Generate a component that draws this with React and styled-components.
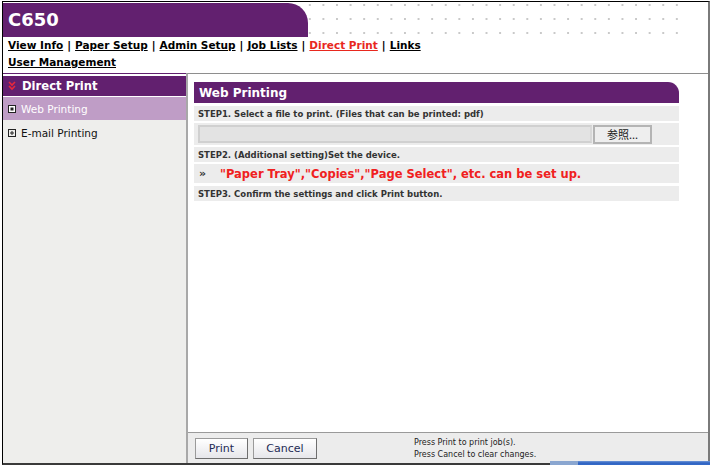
import React from 'react';
import styled, { createGlobalStyle } from 'styled-components';

const GlobalStyle = createGlobalStyle`
	html, body {
		margin: 0;
		padding: 0;
		background: #fff;
		overflow: hidden;
	}
	body {
		font-family: "DejaVu Sans", Verdana, sans-serif;
		color: #000;
	}
`

const purple = '#62206f';

const Frame = styled.div`
	position: relative;
	box-sizing: border-box;
	width: 708px;
	height: 464px;
	margin: 1px 0 0 2px;
	border-top: 1px solid #000;
	border-left: 1px solid #000;
	border-right: 2px solid #7a7a7a;
	border-bottom: 2px solid #3a3a3a;
	display: flex;
	flex-direction: column;
`

const Header = styled.div`
	display: flex;
	height: 34px;
	margin-top: 1px;
`

const TitleTab = styled.div`
	width: 305px;
	background: ${purple};
	border-top-right-radius: 20px;
	color: #fff;
	font-weight: bold;
	font-size: 18px;
	line-height: 33px;
	padding-left: 5px;
	box-sizing: border-box;
`

const Dots = styled.div`
	width: 372px;
	margin-left: -2px;
	background-image: radial-gradient(circle, #c9c9c9 0.9px, transparent 1.4px);
	background-size: 13.6px 14px;
	background-position: -3px -5px;
`

const Nav = styled.div`
	padding: 0 0 0 5px;
	font-size: 10.5px;
	font-weight: bold;
	line-height: 17px;
	height: 36px;
`

const NavLink = styled.a`
	color: ${p => (p.$current ? '#e8281e' : '#000')};
	text-decoration: underline;
	text-underline-offset: 1px;
	cursor: pointer;
`

const Sep = styled.span`
	margin: 0 4px;
`

const Body = styled.div`
	flex: 1;
	display: grid;
	grid-template-columns: 183px 1fr;
	min-height: 0;
`

const Sidebar = styled.div`
	background: #eeeeec;
	border-top: 1px solid ${purple};
	display: flex;
	flex-direction: column;
`

const SideHead = styled.div`
	display: flex;
	align-items: center;
	gap: 6px;
	height: 20px;
	background: ${purple};
	border-top: 2px solid #fff;
	border-bottom: 1px solid #fff;
	padding-left: 5px;
	color: #fff;
	font-size: 11.6px;
	font-weight: bold;
`

const SideItem = styled.div`
	display: flex;
	align-items: center;
	gap: 5px;
	height: ${p => (p.$active ? '23px' : '25px')};
	padding-left: 5px;
	font-size: 10.5px;
	background: ${p => (p.$active ? '#bf9dc6' : 'transparent')};
	color: ${p => (p.$active ? '#fff' : '#111')};
`

const Main = styled.div`
	border-top: 1px solid #8e8e8e;
	border-left: 2px solid #a8a8a8;
	display: flex;
	flex-direction: column;
	min-height: 0;
`

const Content = styled.div`
	flex: 1;
	padding: 8px 29px 0 6px;
	display: flex;
	flex-direction: column;
	gap: 2px;
`

const PanelHead = styled.div`
	height: 21px;
	background: ${purple};
	border-top-right-radius: 11px;
	color: #fff;
	font-size: 12px;
	font-weight: bold;
	line-height: 22px;
	padding-left: 5px;
	margin-bottom: 1px;
`

const Row = styled.div`
	display: flex;
	align-items: center;
	background: #ececec;
	height: ${p => p.$h || 15}px;
	padding: 0 4px;
	font-size: 8.5px;
	font-weight: bold;
	color: #333;
`

const FileField = styled.div`
	width: 394px;
	height: 18px;
	box-sizing: border-box;
	background: #e3e3e3;
	border: 2px solid #d0d0d0;
	border-right-color: #d8d8d8;
`

const BrowseButton = styled.button`
	width: 59px;
	height: 19px;
	margin-left: 1px;
	padding: 0;
	box-sizing: border-box;
	background: #eeeeee;
	border: 2px solid #b4b4b4;
	font-family: "Noto Sans CJK JP", "DejaVu Sans", sans-serif;
	font-size: 11px;
	color: #222;
	line-height: 14px;
`

const Notice = styled.div`
	display: flex;
	align-items: center;
	background: #ececec;
	height: 19px;
	padding-left: 5px;
	font-weight: bold;
	color: #f02020;
	font-size: 11.5px;
	margin: 0 0 1px;
`

const Raquo = styled.span`
	color: #333;
	font-size: 11px;
	width: 21px;
`

const Footer = styled.div`
	height: 30px;
	border-top: 1px solid #9a9a9a;
	background: #ececec;
	display: flex;
	align-items: center;
	padding-left: 7px;
`

const FootButton = styled.button`
	height: 21px;
	width: ${p => p.$w}px;
	margin-right: 5px;
	padding: 0;
	box-sizing: border-box;
	background: linear-gradient(#ffffff, #e6e6ea);
	border: 1px solid #9a9a9a;
	border-right-color: #6e6e6e;
	border-bottom-color: #6e6e6e;
	font-family: "DejaVu Sans", sans-serif;
	font-size: 11px;
	color: #1e2b55;
`

const Hint = styled.div`
	margin-left: 92px;
	font-size: 8px;
	line-height: 12px;
	color: #222;
	padding-top: 1px;
`

const TaskBar = styled.div`
	position: absolute;
	left: 547px;
	bottom: -3px;
	width: 160px;
	height: 5px;
	background: linear-gradient(#6f97d8, #2f63c2 40%, #3a6fcb);
	border-left: 28px solid #8aa6d0;
	box-sizing: border-box;
`

const ChevronDown = () => (
	<svg width="8" height="10" viewBox="0 0 8 10">
		<path d="M1 1 L4 4 L7 1 M1 5 L4 8 L7 5" stroke="#e8283c" strokeWidth="1.6" fill="none" />
	</svg>
)

const BoxIcon = ({ plus, light }) => (
	<svg width="8" height="8" viewBox="0 0 8 8">
		<rect x="0.5" y="0.5" width="7" height="7" fill={light ? '#fff' : 'none'} stroke="#222" />
		{plus ? (
			<path d="M2 4 H6 M4 2 V6" stroke="#222" strokeWidth="1" />
		) : (
			<rect x="2.5" y="2.5" width="3" height="3" fill="#222" />
		)}
	</svg>
)

const links = ['View Info', 'Paper Setup', 'Admin Setup', 'Job Lists', 'Direct Print', 'Links'];

const App = () => {
	return (
		<>
			<GlobalStyle />
			<Frame>
				<Header>
					<TitleTab>C650</TitleTab>
					<Dots />
				</Header>
				<Nav>
					{links.map((l, i) => (
						<React.Fragment key={l}>
							{i > 0 && <Sep>|</Sep>}
							<NavLink $current={l === 'Direct Print'}>{l}</NavLink>
						</React.Fragment>
					))}
					<br />
					<NavLink>User Management</NavLink>
				</Nav>
				<Body>
					<Sidebar>
						<SideHead><ChevronDown />Direct Print</SideHead>
						<SideItem $active><BoxIcon light />Web Printing</SideItem>
						<SideItem><BoxIcon plus />E-mail Printing</SideItem>
					</Sidebar>
					<Main>
						<Content>
							<PanelHead>Web Printing</PanelHead>
							<Row>STEP1. Select a file to print. (Files that can be printed: pdf)</Row>
							<Row $h={22}>
								<FileField />
								<BrowseButton>参照...</BrowseButton>
							</Row>
							<Row>STEP2. (Additional setting)Set the device.</Row>
							<Notice><Raquo>»</Raquo>"Paper Tray","Copies","Page Select", etc. can be set up.</Notice>
							<Row>STEP3. Confirm the settings and click Print button.</Row>
						</Content>
						<Footer>
							<FootButton $w={53}>Print</FootButton>
							<FootButton $w={64}>Cancel</FootButton>
							<Hint>
								Press Print to print job(s).<br />
								Press Cancel to clear changes.
							</Hint>
						</Footer>
					</Main>
				</Body>
				<TaskBar />
			</Frame>
		</>
	)
}

export default App;
